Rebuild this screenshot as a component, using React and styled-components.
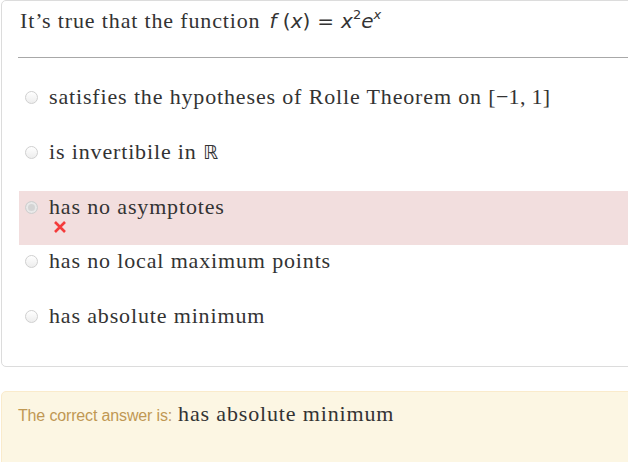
import React from 'react'
import styled, { createGlobalStyle } from 'styled-components'

const GlobalStyle = createGlobalStyle`
  html, body {
    margin: 0;
    padding: 0;
    background: #fff;
    overflow: hidden;
  }
  body {
    font-family: "Liberation Serif", "DejaVu Serif", serif;
    color: #333;
  }
`

const Page = styled.div`
  padding-left: 1px;
  width: 680px;
`

const Card = styled.div`
  border: 1px solid #dcdcdc;
  border-radius: 5px;
  padding: 8px 0 11px 16px;
`

const Serif = styled.span`
  font-family: "Liberation Serif", serif;
  font-size: 22px;
  letter-spacing: 0.85px;
  color: #333;
`

const Question = styled.div`
  padding-left: 2px;
  line-height: 24px;
  height: 24px;
  display: flex;
  align-items: center;
  gap: 9px;
`

const Math = styled.span`
  font-family: "DejaVu Sans", sans-serif;
  font-size: 20px;
  color: #333;
  letter-spacing: 0;
  i { font-style: italic; }
  sup {
    font-size: 13px;
    vertical-align: 9px;
    line-height: 0;
  }
`

const Eq = styled.span`
  margin: 0 7px;
`

const Rule = styled.hr`
  border: none;
  border-top: 1px solid #a8a8a8;
  margin: 24px 0 23px 0;
`

const Options = styled.div`
  display: flex;
  flex-direction: column;
  padding-left: 1px;
`

const Option = styled.div`
  height: ${p => (p.$wrong ? '54px' : '55px')};
  box-sizing: border-box;
  padding: 4px 0 0 6px;
  background: ${p => (p.$wrong ? '#f2dede' : 'transparent')};
`

const Line = styled.div`
  display: flex;
  align-items: center;
  gap: 11px;
  height: 24px;
`

const Radio = styled.span`
  width: 11px;
  height: 11px;
  border-radius: 50%;
  border: 1px solid #d0d0d0;
  background: ${p => (p.$checked ? '#d4d4d4' : 'linear-gradient(#fff, #ededed)')};
  box-shadow: ${p => (p.$checked ? 'inset 0 0 0 2px #e9e9e9' : 'none')};
  flex: none;
`

const Mark = styled.svg`
  display: block;
  margin: 1px 0 0 28px;
`

const MathSerif = styled.span`
  font-family: "Liberation Serif", serif;
  letter-spacing: 0.3px;
`

const Reals = styled.span`
  font-family: "DejaVu Sans", sans-serif;
  font-size: 19px;
`

const Feedback = styled.div`
  margin-top: 24px;
  height: 90px;
  background: #fcf6e3;
  border: 1px solid #faebcc;
  border-radius: 5px;
  padding: 9px 0 0 16px;
  display: flex;
  align-items: baseline;
  gap: 6px;
`

const FeedbackLabel = styled.span`
  font-family: "Liberation Sans", Arial, sans-serif;
  font-size: 16px;
  color: #c09853;
  letter-spacing: -0.15px;
`

const options = [
  {
    key: 'rolle',
    body: (
      <>
        satisfies the hypotheses of Rolle Theorem on <MathSerif>[−1, 1]</MathSerif>
      </>
    ),
  },
  {
    key: 'inv',
    body: (
      <>
        is invertibile in <Reals>ℝ</Reals>
      </>
    ),
  },
  { key: 'asym', body: 'has no asymptotes', wrong: true },
  { key: 'max', body: 'has no local maximum points' },
  { key: 'min', body: 'has absolute minimum' },
]

const App = () => {
  return (
    <Page>
      <GlobalStyle />
      <Card>
        <Question>
          <Serif>It’s true that the function</Serif>
          <Math>
            <i>f</i> (<i>x</i>)<Eq>=</Eq><i>x</i>
            <sup>2</sup>
            <i>e</i>
            <sup><i>x</i></sup>
          </Math>
        </Question>
        <Rule />
        <Options>
          {options.map(o => (
            <Option key={o.key} $wrong={o.wrong}>
              <Line>
                <Radio $checked={o.wrong} />
                <Serif>{o.body}</Serif>
              </Line>
              {o.wrong && (
                <Mark width="14" height="14" viewBox="0 0 14 14">
                  <path d="M2 2 L12 12 M12 2 L2 12" stroke="#f43b3b" strokeWidth="2.6" strokeLinecap="butt" />
                </Mark>
              )}
            </Option>
          ))}
        </Options>
      </Card>
      <Feedback>
        <FeedbackLabel>The correct answer is:</FeedbackLabel>
        <Serif>has absolute minimum</Serif>
      </Feedback>
    </Page>
  )
}

export default App
